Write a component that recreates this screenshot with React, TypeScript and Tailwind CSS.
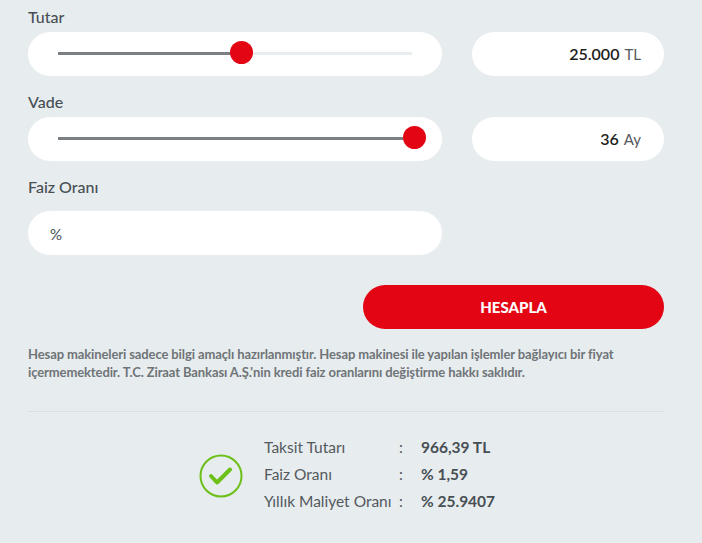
const font = "font-['Lato','Noto_Sans',sans-serif]";

function Slider({ percent }: { percent: number }) {
  return (
    <div className="flex h-11 items-center rounded-[22px] bg-white px-[30px] pb-px">
      <div className="relative h-[3px] w-full bg-[#e8edef]">
        <div className="h-full bg-[#7c8083]" style={{ width: `${Math.min(percent, 100)}%` }} />
        <div
          className="absolute top-[-11px] ml-[-11.5px] h-[23px] w-[23px] rounded-full bg-[#e30513]"
          style={{ left: `${percent}%` }}
        />
      </div>
    </div>
  );
}

function ValueBox({ value, unit }: { value: string; unit: string }) {
  return (
    <div className="flex h-11 items-center justify-end gap-[5px] rounded-[22px] bg-white pr-[23px]">
      <span className="text-[16px] font-semibold text-[#1d1d1b]">{value}</span>
      <span className="text-[15px] text-[#54595d]">{unit}</span>
    </div>
  );
}

function Label({ children }: { children: string }) {
  return <div className="h-[22px] text-[16px] font-medium leading-[22px] text-[#474f54]">{children}</div>;
}

const results = [
  ["Taksit Tutarı", "966,39 TL"],
  ["Faiz Oranı", "% 1,59"],
  ["Yıllık Maliyet Oranı", "% 25.9407"],
];

export default function App() {
  return (
    <div className={`h-[543px] w-[702px] overflow-hidden bg-[#e7ecef] px-[28px] pt-[6px] ${font}`}>
      <div className="w-[636px]">
        <Label>Tutar</Label>
        <div className="mt-1 grid grid-cols-[414px_192px] gap-x-[30px]">
          <Slider percent={51.8} />
          <ValueBox value="25.000" unit="TL" />
        </div>

        <div className="mt-[15px]">
          <Label>Vade</Label>
        </div>
        <div className="mt-1 grid grid-cols-[414px_192px] gap-x-[30px]">
          <Slider percent={100.6} />
          <ValueBox value="36" unit="Ay" />
        </div>

        <div className="mt-[15px]">
          <Label>Faiz Oranı</Label>
        </div>
        <div className="mt-[13px] flex h-11 w-[414px] items-center rounded-[22px] bg-white pl-[22px] pt-[3px] text-[15px] text-[#474f54]">
          %
        </div>

        <div className="mt-[30px] flex justify-end">
          <button className="h-11 w-[301px] rounded-[22px] bg-[#e30513] text-[15px] font-black text-white">
            HESAPLA
          </button>
        </div>

        <p className="mt-[16px] text-[13px] font-bold leading-[18px] tracking-[-0.11px] text-[#6f7477]">
          Hesap makineleri sadece bilgi amaçlı hazırlanmıştır. Hesap makinesi ile yapılan işlemler bağlayıcı bir fiyat
          <br />
          içermemektedir. T.C. Ziraat Bankası A.Ş.'nin kredi faiz oranlarını değiştirme hakkı saklıdır.
        </p>

        <hr className="mt-[30px] border-t border-[#d9dfe2]" />

        <div className="mt-[22px] flex items-center pl-[171px]">
          <svg className="mt-[2px]" width="44" height="44" viewBox="0 0 44 44" fill="none">
            <circle cx="22" cy="22" r="20.5" stroke="#6cc018" strokeWidth="2" />
            <path d="M12 22 L18 28.5 L31 15.5" stroke="#6cc018" strokeWidth="4" strokeLinecap="round" strokeLinejoin="round" />
          </svg>
          <div className="ml-[21px] grid grid-cols-[135px_22px_auto] text-[15.5px] leading-[27px]">
            {results.map(([name, value]) => (
              <div key={name} className="col-span-3 grid grid-cols-subgrid">
                <span className="whitespace-nowrap text-[#54595d]">{name}</span>
                <span className="text-[#54595d]">:</span>
                <span className="font-bold text-[#474f54]">{value}</span>
              </div>
            ))}
          </div>
        </div>
      </div>
    </div>
  );
}
